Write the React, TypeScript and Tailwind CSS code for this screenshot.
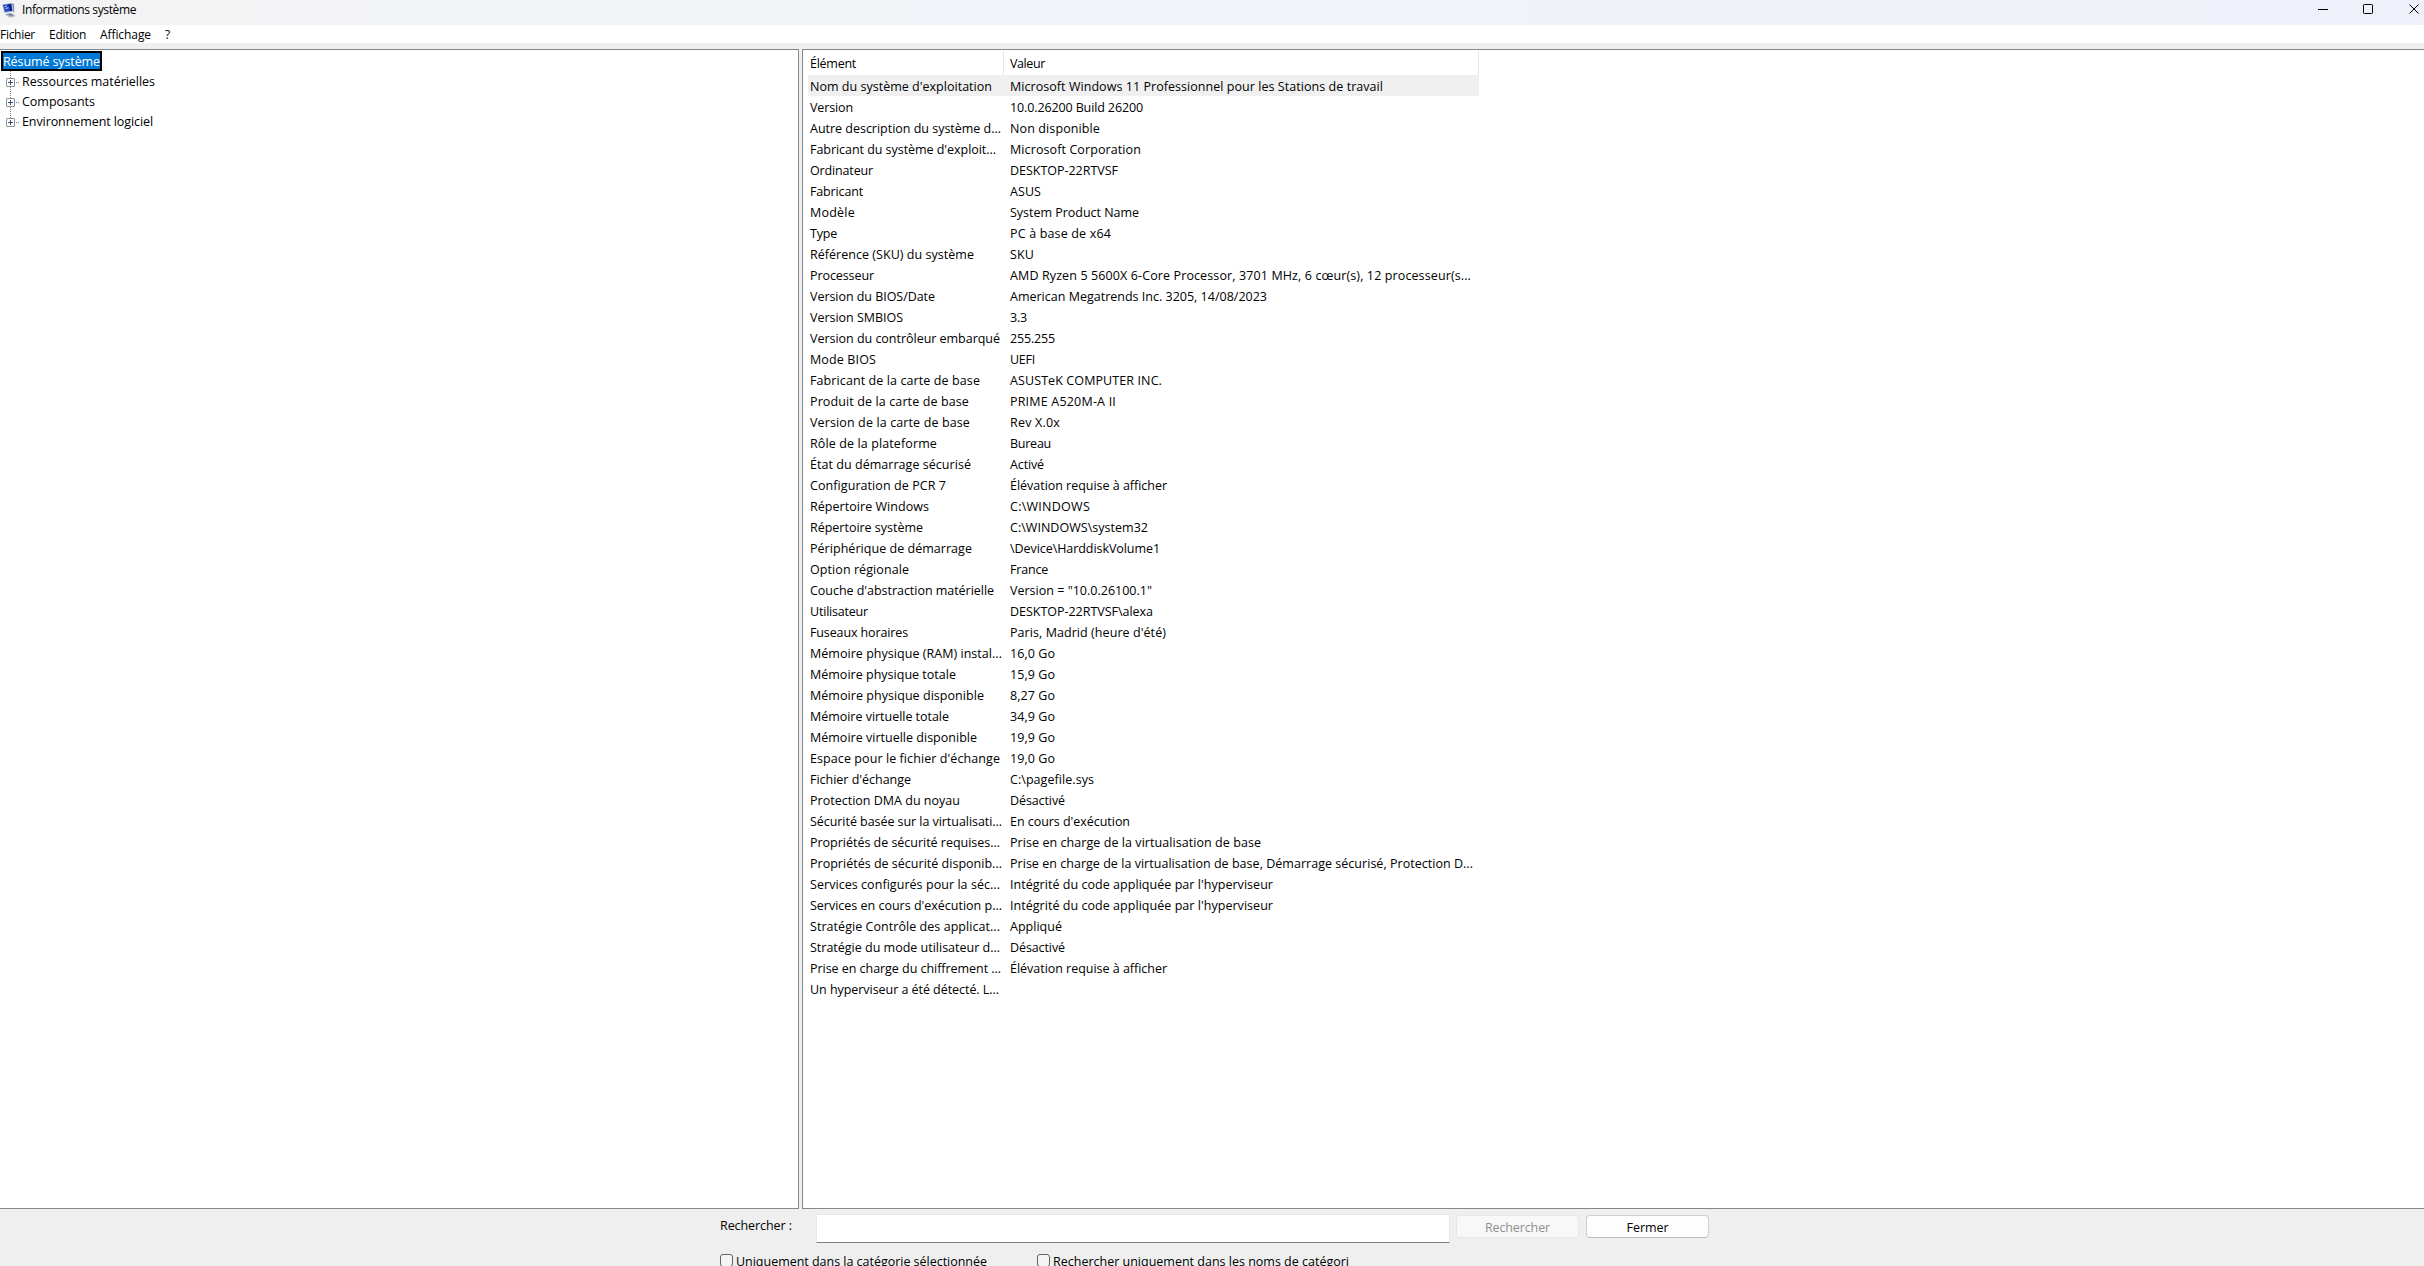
import { useLayoutEffect, useRef } from "react";

type Row = [label: string, labelWidth: number, value: string, valueWidth: number];

// Each text is followed by its advance width in pixels.
const rows: Row[] = [
  ["Nom du système d'exploitation", 182, "Microsoft Windows 11 Professionnel pour les Stations de travail", 373],
  ["Version", 43, "10.0.26200 Build 26200", 133],
  ["Autre description du système d...", 191, "Non disponible", 90],
  ["Fabricant du système d'exploit...", 186, "Microsoft Corporation", 131],
  ["Ordinateur", 63, "DESKTOP-22RTVSF", 108],
  ["Fabricant", 53, "ASUS", 31],
  ["Modèle", 45, "System Product Name", 129],
  ["Type", 27, "PC à base de x64", 101],
  ["Référence (SKU) du système", 164, "SKU", 24],
  ["Processeur", 64, "AMD Ryzen 5 5600X 6-Core Processor, 3701 MHz, 6 cœur(s), 12 processeur(s...", 461],
  ["Version du BIOS/Date", 125, "American Megatrends Inc. 3205, 14/08/2023", 257],
  ["Version SMBIOS", 93, "3.3", 17],
  ["Version du contrôleur embarqué", 190, "255.255", 45],
  ["Mode BIOS", 66, "UEFI", 25],
  ["Fabricant de la carte de base", 170, "ASUSTeK COMPUTER INC.", 152],
  ["Produit de la carte de base", 159, "PRIME A520M-A II", 106],
  ["Version de la carte de base", 160, "Rev X.0x", 50],
  ["Rôle de la plateforme", 127, "Bureau", 41],
  ["État du démarrage sécurisé", 161, "Activé", 34],
  ["Configuration de PCR 7", 136, "Élévation requise à afficher", 157],
  ["Répertoire Windows", 119, "C:\\WINDOWS", 80],
  ["Répertoire système", 113, "C:\\WINDOWS\\system32", 138],
  ["Périphérique de démarrage", 162, "\\Device\\HarddiskVolume1", 150],
  ["Option régionale", 99, "France", 38],
  ["Couche d'abstraction matérielle", 184, "Version = \"10.0.26100.1\"", 142],
  ["Utilisateur", 58, "DESKTOP-22RTVSF\\alexa", 143],
  ["Fuseaux horaires", 98, "Paris, Madrid (heure d'été)", 156],
  ["Mémoire physique (RAM) instal...", 192, "16,0 Go", 45],
  ["Mémoire physique totale", 146, "15,9 Go", 45],
  ["Mémoire physique disponible", 174, "8,27 Go", 45],
  ["Mémoire virtuelle totale", 139, "34,9 Go", 45],
  ["Mémoire virtuelle disponible", 167, "19,9 Go", 45],
  ["Espace pour le fichier d'échange", 190, "19,0 Go", 45],
  ["Fichier d'échange", 101, "C:\\pagefile.sys", 84],
  ["Protection DMA du noyau", 150, "Désactivé", 55],
  ["Sécurité basée sur la virtualisati...", 192, "En cours d'exécution", 120],
  ["Propriétés de sécurité requises...", 190, "Prise en charge de la virtualisation de base", 251],
  ["Propriétés de sécurité disponib...", 192, "Prise en charge de la virtualisation de base, Démarrage sécurisé, Protection D...", 463],
  ["Services configurés pour la séc...", 190, "Intégrité du code appliquée par l'hyperviseur", 263],
  ["Services en cours d'exécution p...", 192, "Intégrité du code appliquée par l'hyperviseur", 263],
  ["Stratégie Contrôle des applicat...", 190, "Appliqué", 52],
  ["Stratégie du mode utilisateur d...", 190, "Désactivé", 55],
  ["Prise en charge du chiffrement ...", 191, "Élévation requise à afficher", 157],
  ["Un hyperviseur a été détecté. L...", 189, "", 0],
];

// Spreads the letters so that the run takes the given width.
function T({ w, children, className = "" }: { w: number; children: string; className?: string }) {
  const ref = useRef<HTMLSpanElement>(null);
  useLayoutEffect(() => {
    const el = ref.current;
    if (!el || !w) return;
    el.style.letterSpacing = "0px";
    const natural = el.getBoundingClientRect().width;
    el.style.letterSpacing = `${(w - natural) / children.length}px`;
  }, [w, children]);
  return (
    <span ref={ref} className={`block w-max whitespace-pre ${className}`}>
      {children}
    </span>
  );
}

function AppIcon() {
  return (
    <svg className="ml-px h-4 w-4 shrink-0" viewBox="0 0 16 16">
      <path d="M1 2.2 11 .8 12.4 9.8 3.2 11z" fill="#b9c3da" />
      <path d="M2 3 10.2 1.8 11.3 8.8 3.9 9.9z" fill="#2448c4" />
      <path d="M7 2.3 10.2 1.8 11.3 8.8 9 9.1z" fill="#10268c" />
      <path d="m3.6 4.6 2-.3M4.2 6.4l3.4-.5" stroke="#b4cbff" strokeWidth="1" />
      <path d="m11.2 1 2 1v9l-.8-1z" fill="#8090b4" />
      <path d="M4.5 11.8 10 10.9 14.2 13.2 13 15.2 8.5 15.4 4.5 13z" fill="#b3bdd0" />
      <path d="m6 12.2 4-.6 2.8 1.6-3.4.8z" fill="#7685a4" />
    </svg>
  );
}

const tree = [
  { name: "Ressources matérielles", w: 133 },
  { name: "Composants", w: 73 },
  { name: "Environnement logiciel", w: 131 },
];

export default function App() {
  return (
    <div className="flex h-[1266px] w-[2424px] flex-col overflow-hidden bg-[#efefef] font-['Open_Sans','Noto_Sans',sans-serif] text-[12.5px] leading-[20px] text-black">
      <header className="flex h-[25px] shrink-0 items-start bg-linear-to-r from-[#f3f3f3] via-[#f0f3f9] to-[#eef1f9]">
        <div className="flex h-5 items-center gap-[5px] text-[12px]">
          <AppIcon />
          <T w={114}>Informations système</T>
        </div>
        <svg className="ml-auto h-[25px] w-[106px]" viewBox="0 0 106 25" fill="none" stroke="#000">
          <path d="M0 9.5h10" />
          <rect x="45.5" y="4.5" width="9" height="9" rx="0.8" />
          <path d="m91.5 4.5 9 9m0-9-9 9" />
        </svg>
      </header>
      <nav className="flex h-[18px] shrink-0 items-center gap-[14px] bg-white pt-[2px] text-[12px]">
        <T w={35}>Fichier</T>
        <T w={37}>Edition</T>
        <T w={51}>Affichage</T>
        <T w={6}>?</T>
      </nav>

      <main className="mt-[6px] flex h-[1160px] shrink-0 gap-[3px]">
        <section className="w-[799px] border-y border-r border-[#828790] bg-white">
          <div className="mt-px ml-px flex h-5 w-[101px] items-center border-2 border-black bg-[#0078d7] text-white">
            <T w={97} className="pt-[2px]">Résumé système</T>
          </div>
          {tree.map((t, i) => (
            <div key={t.name} className="flex h-5 items-center">
              <svg className="h-5 w-[22px] shrink-0" viewBox="0 0 22 20" fill="none">
                <path d={i === 2 ? "M10.5 0v7" : "M10.5 0v20"} stroke="#808080" strokeDasharray="1 1" />
                <path d="M16 11.5h4" stroke="#808080" strokeDasharray="1 1" />
                <rect x="6.5" y="7.5" width="8" height="8" rx="0.5" fill="#fff" stroke="#919191" />
                <path d="M8 11.5h5M10.5 9v5" stroke="#36507f" />
              </svg>
              <T w={t.w} className="pt-[2px]">{t.name}</T>
            </div>
          ))}
        </section>

        <section className="min-w-0 flex-1 border-y border-l border-[#828790] bg-white pt-px pl-[5px]">
          <div className="flex h-6 w-[671px] items-center">
            <div className="flex h-6 w-[196px] items-center border-r border-[#e5e5e5] pt-[2px] pl-[2px]">
              <T w={46}>Élément</T>
            </div>
            <div className="flex h-6 flex-1 items-center border-r border-[#e5e5e5] pt-[2px] pl-[6px]">
              <T w={35}>Valeur</T>
            </div>
          </div>
          {rows.map(([a, aw, b, bw], i) => (
            <div key={a} className={`flex h-[21px] w-[671px] pt-[2px] ${i === 0 ? "bg-[#f0f0f0]" : ""}`}>
              <div className="w-[202px] shrink-0 pl-[2px]">
                <T w={aw}>{a}</T>
              </div>
              <T w={bw}>{b}</T>
            </div>
          ))}
        </section>
      </main>

      <footer className="flex flex-col pl-[720px]">
        <div className="mt-[5px] flex h-[29px] items-start">
          <div className="mt-[2px] w-24">
            <T w={72}>Rechercher :</T>
          </div>
          <input className="h-[29px] w-[634px] border border-[#e8e8e8] border-b-[#808080] bg-white outline-none" />
          <button className="mt-px ml-[6px] flex h-[23px] w-[123px] justify-center rounded border border-[#e6e6e6] bg-[#f8f8f8] pt-[2px] text-[#8f8f8f]">
            <T w={65}>Rechercher</T>
          </button>
          <button className="mt-px ml-[7px] flex h-[23px] w-[123px] justify-center rounded border border-[#cfcfcf] border-b-[#b9b9b9] bg-[#fdfdfd] pt-[2px]">
            <T w={42}>Fermer</T>
          </button>
        </div>
        <div className="mt-[9px] flex h-[22px] items-start">
          <div className="flex w-[317px] items-start gap-[3px]">
            <span className="mt-[2px] h-[13px] w-[13px] rounded-[3px] border border-[#626262] bg-[#f5f5f5]" />
            <T w={251}>Uniquement dans la catégorie sélectionnée</T>
          </div>
          <div className="flex items-start gap-[3px]">
            <span className="mt-[2px] h-[13px] w-[13px] rounded-[3px] border border-[#626262] bg-[#f5f5f5]" />
            <T w={296}>Rechercher uniquement dans les noms de catégori</T>
          </div>
        </div>
      </footer>
    </div>
  );
}
